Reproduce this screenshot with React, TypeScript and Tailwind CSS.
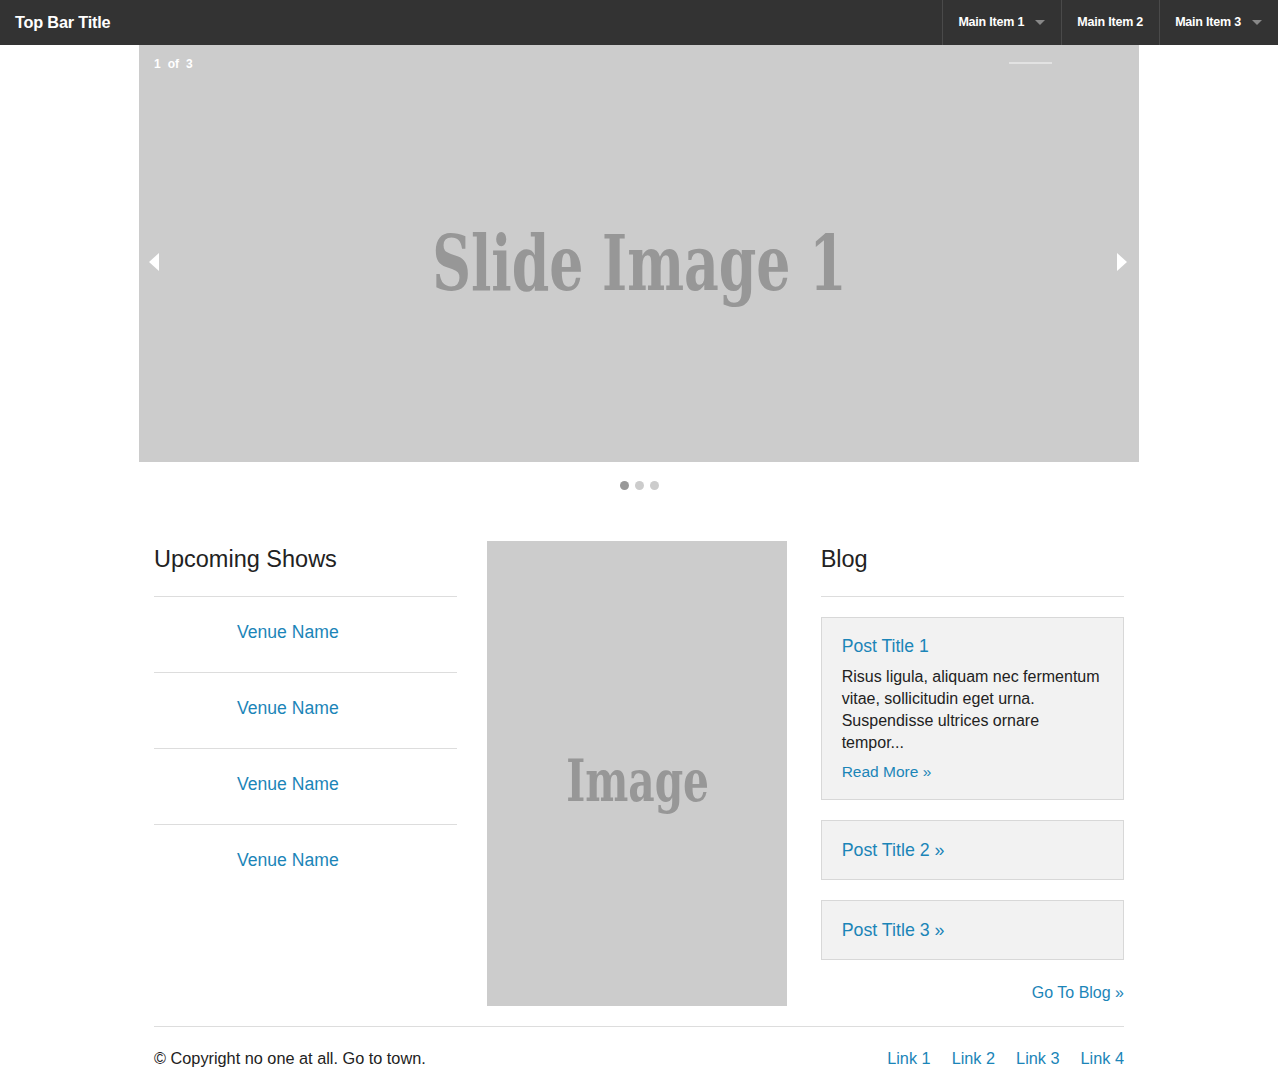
import React from "react";

const navItems: { label: string; dropdown: boolean }[] = [
  { label: "Main Item 1", dropdown: true },
  { label: "Main Item 2", dropdown: false },
  { label: "Main Item 3", dropdown: true },
];

const venues = ["Venue Name", "Venue Name", "Venue Name", "Venue Name"];

const footerLinks = ["Link 1", "Link 2", "Link 3", "Link 4"];

const App = () => {
  return (
    <div className="min-h-screen bg-white text-[#222] font-['Liberation_Sans',Arial,sans-serif]">
      {/* top bar */}
      <nav className="h-[45px] bg-[#333] flex items-stretch justify-between">
        <h1 className="pl-[15px] text-white font-bold text-[16.3px] leading-[45px] tracking-[-0.2px]">
          Top Bar Title
        </h1>
        <ul className="flex items-stretch">
          {navItems.map((item, index) => (
            <li
              key={index}
              className="border-l border-[#4a4a4a] pl-[15px] pr-[16px] flex items-center gap-[11px] text-white font-bold text-[12.5px] tracking-[-0.2px]"
            >
              <span>{item.label}</span>
              {item.dropdown && (
                <span className="w-0 h-0 border-x-[5px] border-x-transparent border-t-[5px] border-t-[#888]" />
              )}
            </li>
          ))}
        </ul>
      </nav>

      {/* slider */}
      <div className="relative w-[1000px] h-[417px] mx-auto bg-[#ccc]">
        <div className="absolute top-[13px] left-[15px] text-white font-bold text-[12px] leading-[13px] flex gap-[7px]">
          <span>1</span>
          <span>of</span>
          <span>3</span>
        </div>
        <div className="absolute top-[17px] right-[87px] w-[43px] h-[2px] bg-[#e2e2e2]" />
        <span className="absolute left-[10px] top-[208px] w-0 h-0 border-y-[9px] border-y-transparent border-r-[10px] border-r-white" />
        <span className="absolute right-[12px] top-[208px] w-0 h-0 border-y-[9px] border-y-transparent border-l-[10px] border-l-white" />
        <div className="h-full flex items-center justify-center pt-[20px]">
          <span className="font-['DejaVu_Serif_Condensed','DejaVu_Serif',serif] font-bold text-[77px] text-[#979797] scale-x-[0.775] whitespace-nowrap">
            Slide Image 1
          </span>
        </div>
      </div>

      <div className="flex justify-center gap-[6px] mt-[19px]">
        <span className="w-[9px] h-[9px] rounded-full bg-[#999]" />
        <span className="w-[9px] h-[9px] rounded-full bg-[#ccc]" />
        <span className="w-[9px] h-[9px] rounded-full bg-[#ccc]" />
      </div>

      {/* main content */}
      <div className="w-[1000px] mx-auto mt-[51px] grid grid-cols-3">
        <section className="px-[15px]">
          <h3 className="text-[23.5px] leading-[36px]">Upcoming Shows</h3>
          <div className="mt-[19px] border-t border-[#ddd]">
            {venues.map((venue, index) => (
              <div
                key={index}
                className={
                  index < venues.length - 1
                    ? "h-[76px] flex items-center pb-[6px] pl-[83px] border-b border-[#ddd]"
                    : "h-[76px] flex items-center pb-[6px] pl-[83px]"
                }
              >
                <a className="text-[#1b85b8] text-[17.6px] leading-[22px]">{venue}</a>
              </div>
            ))}
          </div>
        </section>

        <section className="px-[15px]">
          <div className="w-[300px] h-[465px] bg-[#ccc] flex items-center justify-center pt-[15px]">
            <span className="font-['DejaVu_Serif_Condensed','DejaVu_Serif',serif] font-bold text-[58px] text-[#979797] scale-x-[0.78]">
              Image
            </span>
          </div>
        </section>

        <section className="px-[15px]">
          <h3 className="text-[23.5px] leading-[36px]">Blog</h3>
          <div className="mt-[19px] border-t border-[#ddd]" />
          <div className="mt-[20px] border border-[#d8d8d8] bg-[#f2f2f2] px-[20px] pt-[17px] pb-[17px]">
            <a className="block text-[#1b85b8] text-[17.6px] leading-[22px]">Post Title 1</a>
            <p className="mt-[9px] text-[16px] leading-[22px]">
              Risus ligula, aliquam nec fermentum vitae, sollicitudin eget urna. Suspendisse ultrices ornare tempor...
            </p>
            <a className="block mt-[8px] text-[#1b85b8] text-[15.5px] leading-[20px]">Read More »</a>
          </div>
          <div className="mt-[20px] border border-[#d8d8d8] bg-[#f2f2f2] px-[20px] py-[18px]">
            <a className="block text-[#1b85b8] text-[17.8px] leading-[22px]">Post Title 2 »</a>
          </div>
          <div className="mt-[20px] border border-[#d8d8d8] bg-[#f2f2f2] px-[20px] py-[18px]">
            <a className="block text-[#1b85b8] text-[17.8px] leading-[22px]">Post Title 3 »</a>
          </div>
          <div className="mt-[21px] text-right">
            <a className="text-[#1b85b8] text-[16px] leading-[22px]">Go To Blog »</a>
          </div>
        </section>
      </div>

      {/* footer */}
      <footer className="w-[970px] mx-auto mt-[20px] border-t border-[#ddd] pt-[20px] pb-[20px] flex justify-between text-[16.3px] leading-[22px]">
        <p>© Copyright no one at all. Go to town.</p>
        <ul className="flex gap-[21px]">
          {footerLinks.map((link, index) => (
            <li key={index}>
              <a className="text-[#1b85b8]">{link}</a>
            </li>
          ))}
        </ul>
      </footer>
    </div>
  );
};

export default App;
